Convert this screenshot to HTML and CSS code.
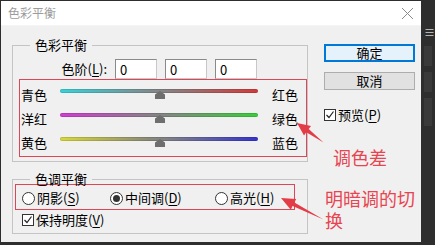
FILE: index.html
```html
<!DOCTYPE html>
<html lang="zh-CN">
<head>
  <meta charset="UTF-8" />
  <title>色彩平衡</title>
  <link rel="stylesheet" href="styles.css">
</head>
<body>
  <div class="screen">
    <div class="dialog">
      <div class="titlebar">
        <span class="title">色彩平衡</span>
        <svg class="close" width="13" height="13" viewBox="0 0 13 13">
          <path d="M1 1 L12 12 M12 1 L1 12" stroke="#8a8a8a" stroke-width="1" fill="none"/>
        </svg>
      </div>

      <div class="content">
        <div class="main">
          <fieldset class="group color-group">
            <legend>色彩平衡</legend>
            <div class="levels">
              <label class="levels-label">色阶(<u>L</u>):</label>
              <input type="text" value="0" />
              <input type="text" value="0" />
              <input type="text" value="0" />
            </div>
            <div class="sliders mark">
              <div class="slider-row">
                <span class="left-label">青色</span>
                <div class="slider"><div class="track cyan-red"></div><div class="thumb"></div></div>
                <span class="right-label">红色</span>
              </div>
              <div class="slider-row">
                <span class="left-label">洋红</span>
                <div class="slider"><div class="track magenta-green"></div><div class="thumb"></div></div>
                <span class="right-label">绿色</span>
              </div>
              <div class="slider-row">
                <span class="left-label">黄色</span>
                <div class="slider"><div class="track yellow-blue"></div><div class="thumb"></div></div>
                <span class="right-label">蓝色</span>
              </div>
            </div>
          </fieldset>

          <fieldset class="group tone-group">
            <legend>色调平衡</legend>
            <div class="radios mark">
              <span class="radio-item r1"><span class="radio"></span>阴影(<u>S</u>)</span>
              <span class="radio-item r2"><span class="radio checked"></span>中间调(<u>D</u>)</span>
              <span class="radio-item"><span class="radio"></span>高光(<u>H</u>)</span>
            </div>
            <div class="check-row">
              <span class="checkbox">
                <svg width="12" height="12" viewBox="0 0 12 12"><path d="M2.5 6 L5 8.5 L9.5 2.5" stroke="#222" stroke-width="1.2" fill="none"/></svg>
              </span>保持明度(<u>V</u>)
            </div>
          </fieldset>
        </div>

        <div class="side">
          <button class="btn primary">确定</button>
          <button class="btn">取消</button>
          <div class="check-row preview">
            <span class="checkbox">
              <svg width="12" height="12" viewBox="0 0 12 12"><path d="M2.5 6 L5 8.5 L9.5 2.5" stroke="#222" stroke-width="1.2" fill="none"/></svg>
            </span>预览(<u>P</u>)
          </div>
        </div>
      </div>
    </div>

    <div class="panel">
      <div class="panel-icon">≡</div>
      <div class="panel-block"></div>
      <div class="panel-block"></div>
      <div class="panel-block tall"></div>
    </div>

    <!-- annotations drawn on top of the screenshot -->
    <div class="note note-1">调色差</div>
    <div class="note note-2">明暗调的切换</div>
    <svg class="arrows" width="435" height="245" viewBox="0 0 435 245">
      <polygon fill="#e43c46" points="297,123 311,125.9 308.7,129.1 323.5,142.5 306.3,132.3 304,135.5"/>
      <polygon fill="#e43c46" points="281,198 296.2,198.9 294.4,202.5 323.5,219.5 292.6,206.1 290.8,209.7"/>
    </svg>
  </div>
</body>
</html>
```

FILE: styles.css
```css
html, body {
  margin: 0;
  padding: 0;
}
body {
  font-family: "Noto Sans CJK SC", "Microsoft YaHei", sans-serif;
  font-size: 13px;
  color: #000;
  background: #2e2e2e;
}
u {
  text-decoration: underline;
  text-underline-offset: 2px;
}
.screen {
  position: relative;
  width: 435px;
  height: 245px;
  display: flex;
  background: #2e2e2e;
  overflow: hidden;
}
.dialog {
  margin: 1px 0 0 1px;
  width: 423px;
  height: 241px;
  background: #f0f0f0;
  display: flex;
  flex-direction: column;
}
.titlebar {
  height: 24px;
  background: #fff;
  display: flex;
  align-items: center;
  justify-content: space-between;
  padding: 0 7px 0 7px;
  border-bottom: 1px solid #f4f4f4;
}
.title {
  color: #9c9c9c;
  font-size: 12px;
  line-height: 16px;
}
.close {
  margin-right: 0;
}
.content {
  display: flex;
  padding: 11px 0 0 11px;
}
.main {
  width: 296px;
}
.group {
  margin: 0;
  padding: 0;
  min-width: 0;
  border: 1px solid #c4c4c4;
  box-sizing: border-box;
  width: 296px;
}
.group legend {
  margin-left: 17px;
  padding: 0 5px;
  font-size: 13px;
  line-height: 16px;
}
.color-group {
  height: 125px;
}
.tone-group {
  margin-top: 9px;
  height: 63px;
}
.levels {
  display: flex;
  align-items: center;
  gap: 8px;
  margin-top: 6px;
  height: 20px;
}
.levels-label {
  width: 94px;
  text-align: right;
  line-height: 16px;
}
.levels input {
  width: 42px;
  height: 20px;
  box-sizing: border-box;
  border: 1px solid #7a7a7a;
  border-color: #8a8a8a #c8c8c8 #c8c8c8 #8a8a8a;
  padding: 0 4px;
  font-family: inherit;
  font-size: 13px;
  background: #fff;
  outline: none;
}
.mark {
  border: 1px solid #dc4656;
}
.sliders {
  margin-left: 6px;
  padding: 3px 0 1px 1px;
}
.slider-row {
  display: flex;
  align-items: center;
  height: 24px;
  line-height: 16px;
}
.left-label {
  width: 39px;
}
.slider {
  position: relative;
  width: 198px;
  height: 14px;
}
.track {
  margin-top: 1px;
  height: 4px;
  border-radius: 2px;
  box-shadow: inset 0 0 0 1px rgba(0, 0, 0, 0.12);
}
.cyan-red {
  background: linear-gradient(to right, #35d2da, #7f8c8e 45%, #8a8080 55%, #d23a3a);
}
.magenta-green {
  background: linear-gradient(to right, #d23ad2, #8a7f8a 45%, #7f8a7f 55%, #3ace3a);
}
.yellow-blue {
  background: linear-gradient(to right, #d8d83a, #8a8a7a 45%, #7f7f8a 55%, #3434cc);
}
.thumb {
  position: absolute;
  left: 95px;
  top: 3px;
  width: 10px;
  height: 8px;
  background: #6e6e6e;
  clip-path: polygon(50% 0, 100% 45%, 100% 100%, 0 100%, 0 45%);
}
.right-label {
  margin-left: 14px;
}
.radios {
  display: flex;
  align-items: center;
  margin: -3px 0 0 2px;
  width: 272px;
  height: 22px;
  padding: 2px 0 0 6px;
  line-height: 16px;
}
.radio-item {
  display: flex;
  align-items: center;
}
.r1 {
  width: 88px;
}
.r2 {
  width: 105px;
}
.radio {
  width: 11px;
  height: 11px;
  border: 1px solid #333;
  border-radius: 50%;
  background: #fff;
  margin-right: 2px;
  display: flex;
  align-items: center;
  justify-content: center;
}
.radio.checked::after {
  content: "";
  width: 7px;
  height: 7px;
  border-radius: 50%;
  background: #333;
}
.check-row {
  display: flex;
  align-items: center;
  line-height: 16px;
  margin: 1px 0 0 9px;
  height: 17px;
}
.checkbox {
  width: 12px;
  height: 12px;
  box-sizing: border-box;
  border: 1px solid #333;
  background: #fff;
  margin-right: 2px;
  display: flex;
}
.checkbox svg {
  margin: -1px;
}
.side {
  display: flex;
  flex-direction: column;
  margin-left: 16px;
  padding-top: 7px;
  width: 91px;
}
.btn {
  height: 18px;
  box-sizing: border-box;
  border: 1px solid #adadad;
  background: #e1e1e1;
  font-family: inherit;
  font-size: 13px;
  line-height: 14px;
  padding: 0;
  margin-bottom: 11px;
  color: #000;
}
.btn.primary {
  border: 2px solid #0078d7;
  background: #e5f1fb;
  margin-bottom: 10px;
}
.preview {
  margin: 5px 0 0 0;
}
.panel {
  flex: 1;
  display: flex;
  flex-direction: column;
  gap: 6px;
  padding: 26px 0 0 3px;
}
.panel-icon {
  color: #cfcfcf;
  font-size: 11px;
  line-height: 12px;
  height: 14px;
}
.panel-block {
  height: 20px;
  width: 8px;
  background: #3a3a3a;
}
.panel-block.tall {
  height: 28px;
}
.note {
  position: absolute;
  color: #e84450;
  font-size: 18px;
  line-height: 22px;
}
.note-1 {
  left: 333px;
  top: 146px;
}
.note-2 {
  left: 325px;
  top: 187px;
  width: 92px;
}
.arrows {
  position: absolute;
  left: 0;
  top: 0;
}
```
